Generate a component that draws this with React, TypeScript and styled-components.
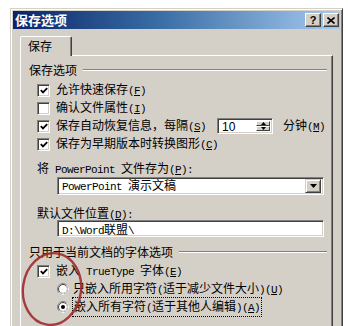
import React from "react";
import styled, { createGlobalStyle } from "styled-components";

const Global = createGlobalStyle`
  html, body { margin: 0; padding: 0; background: #fff; overflow: hidden; }
  body {
    font-family: "Noto Sans CJK SC", "Noto Sans", sans-serif;
    font-size: 12px;
    color: #000;
  }
`;

const Page = styled.div`
  position: relative;
  width: 348px;
  height: 326px;
  overflow: hidden;
`;

const Window = styled.div`
  margin: 8px 0 0 10px;
  width: 333px;
  height: 330px;
  box-sizing: border-box;
  background: #d4d0c8;
  border: 1px solid;
  border-color: #d4d0c8 #404040 #404040 #d4d0c8;
  box-shadow: inset 1px 1px 0 #fff, inset -1px -1px 0 #808080;
  padding: 2px;
  display: flex;
  flex-direction: column;
`;

const TitleBar = styled.div`
  height: 18px;
  flex: none;
  display: flex;
  align-items: center;
  padding: 0 1px 0 2px;
  background: linear-gradient(to right, #0a246a 0%, #3a6ea5 45%, #a6caf0 100%);
`;

const TitleText = styled.div`
  flex: 1;
  color: #fff;
  font-weight: bold;
  font-size: 13px;
  line-height: 18px;
`;

const TitleButton = styled.div<{ $gap?: number }>`
  box-sizing: border-box;
  width: 16px;
  height: 14px;
  margin-left: ${(p) => p.$gap ?? 0}px;
  background: #d4d0c8;
  border: 1px solid;
  border-color: #fff #404040 #404040 #fff;
  box-shadow: inset -1px -1px 0 #808080;
  display: flex;
  align-items: center;
  justify-content: center;
  font-family: "Liberation Sans", Arial, sans-serif;
  font-weight: bold;
  font-size: 11px;
  line-height: 12px;
`;

const Body = styled.div`
  flex: 1;
  display: flex;
  flex-direction: column;
  padding: 7px 7px 0 7px;
`;

const TabStrip = styled.div`
  display: flex;
  height: 19px;
  position: relative;
  z-index: 1;
`;

const Tab = styled.div`
  box-sizing: border-box;
  width: 52px;
  height: 20px;
  padding-left: 7px;
  background: #d4d0c8;
  border: 1px solid;
  border-bottom: none;
  border-color: #fff #404040 transparent #fff;
  border-radius: 2px 2px 0 0;
  box-shadow: inset -1px 0 0 #808080;
  font-size: 12px;
  line-height: 18px;
`;

const Panel = styled.div`
  flex: 1;
  box-sizing: border-box;
  border: 1px solid;
  border-color: #fff #404040 #404040 #fff;
  box-shadow: inset -1px -1px 0 #808080;
  padding: 6px 5px 0 8px;
  display: flex;
  flex-direction: column;
`;

const GroupHeader = styled.div<{ $top?: number }>`
  display: flex;
  align-items: center;
  gap: 6px;
  height: 16px;
  line-height: 16px;
  margin-top: ${(p) => p.$top ?? 0}px;
  white-space: nowrap;
`;

const GroupLine = styled.div`
  flex: 1;
  height: 0;
  border-top: 1px solid #808080;
  border-bottom: 1px solid #fff;
`;

const OptionList = styled.div<{ $top: number }>`
  display: flex;
  flex-direction: column;
  margin-top: ${(p) => p.$top}px;
  padding-left: 8px;
`;

const OptionRow = styled.div<{ $indent?: number; $gap?: number }>`
  display: flex;
  align-items: center;
  height: 18px;
  padding-left: ${(p) => p.$indent ?? 0}px;
  gap: ${(p) => p.$gap ?? 6}px;
  white-space: nowrap;
`;

const Text = styled.span`
  line-height: 16px;
  white-space: nowrap;
`;

const Mono = styled.span`
  font-family: "Liberation Mono", "DejaVu Sans Mono", monospace;
  font-size: 11px;
  letter-spacing: -0.6px;
  white-space: pre;
`;

const Under = styled.span`
  text-decoration: underline;
  text-underline-offset: 1px;
`;

const Focus = styled.span`
  border: 1px dotted #000;
  padding: 0 1px;
  line-height: 16px;
`;

const FieldLabel = styled.div<{ $top: number; $h?: number }>`
  margin-top: ${(p) => p.$top}px;
  padding-left: 8px;
  height: ${(p) => p.$h ?? 16}px;
  line-height: ${(p) => p.$h ?? 16}px;
  white-space: nowrap;
`;

const Sunken = styled.div`
  box-sizing: border-box;
  background: #fff;
  border: 1px solid;
  border-color: #808080 #fff #fff #808080;
  box-shadow: inset 1px 1px 0 #404040, inset -1px -1px 0 #d4d0c8;
`;

const Select = styled(Sunken)`
  margin: 1px 3px 0 28px;
  height: 18px;
  display: flex;
  align-items: center;
  padding: 2px 2px 2px 4px;
`;

const SelectValue = styled.div`
  flex: 1;
  line-height: 14px;
  white-space: nowrap;
`;

const DropButton = styled.div`
  box-sizing: border-box;
  width: 16px;
  height: 14px;
  background: #d4d0c8;
  border: 1px solid;
  border-color: #d4d0c8 #404040 #404040 #d4d0c8;
  box-shadow: inset 1px 1px 0 #fff, inset -1px -1px 0 #808080;
  display: flex;
  align-items: center;
  justify-content: center;
`;

const TextField = styled(Sunken)`
  margin: 0 3px 0 28px;
  height: 17px;
  padding: 0 4px;
  line-height: 15px;
  white-space: nowrap;
`;

const SpinBox = styled(Sunken)`
  margin-left: 5px;
  width: 56px;
  height: 16px;
  display: flex;
  padding: 2px;
`;

const SpinValue = styled.div`
  flex: 1;
  padding-left: 2px;
  font-family: "Liberation Sans", Arial, sans-serif;
  font-size: 12px;
  line-height: 12px;
`;

const SpinButtons = styled.div`
  width: 14px;
  display: flex;
  flex-direction: column;
`;

const SpinButton = styled.div`
  flex: 1;
  box-sizing: border-box;
  background: #d4d0c8;
  border: 1px solid;
  border-color: #fff #404040 #404040 #fff;
  display: flex;
  align-items: center;
  justify-content: center;
`;

const Unit = styled.span`
  margin-left: 4px;
  line-height: 16px;
`;

const CheckBox = styled.span`
  box-sizing: border-box;
  width: 13px;
  height: 13px;
  flex: none;
  background: #fff;
  border: 1px solid;
  border-color: #808080 #fff #fff #808080;
  box-shadow: inset 1px 1px 0 #404040, inset -1px -1px 0 #d4d0c8;
  display: flex;
  align-items: center;
  justify-content: center;
`;

const Annotation = styled.svg`
  position: absolute;
  left: 11px;
  top: 245px;
  pointer-events: none;
`;

function Key({ k, colon }: { k: string; colon?: boolean }) {
  return (
    <Mono>
      (<Under>{k}</Under>){colon ? ":" : ""}
    </Mono>
  );
}

function Check({ checked }: { checked: boolean }) {
  return (
    <CheckBox>
      {checked && (
        <svg width="8" height="7" viewBox="0 0 8 7">
          <path d="M0.8 3.2 L3 5.4 L7.2 1.2" fill="none" stroke="#000" strokeWidth="1.8" />
        </svg>
      )}
    </CheckBox>
  );
}

function Radio({ checked }: { checked: boolean }) {
  return (
    <svg width="12" height="12" viewBox="0 0 12 12" style={{ flex: "none" }}>
      <circle cx="6" cy="6" r="5.5" fill="#fff" stroke="#808080" />
      <path d="M2.11 9.89 A5.5 5.5 0 0 0 9.89 2.11" fill="none" stroke="#fff" />
      <circle cx="6" cy="6" r="4.5" fill="#fff" stroke="#404040" />
      <path d="M2.82 9.18 A4.5 4.5 0 0 0 9.18 2.82" fill="none" stroke="#d4d0c8" />
      {checked && <circle cx="6" cy="6" r="2" fill="#000" />}
    </svg>
  );
}

export default function App() {
  return (
    <Page>
      <Global />
      <Window>
        <TitleBar>
          <TitleText>保存选项</TitleText>
          <TitleButton>?</TitleButton>
          <TitleButton $gap={2}>
            <svg width="8" height="7" viewBox="0 0 8 7">
              <path d="M0.5 0.5 L7.5 6.5 M7.5 0.5 L0.5 6.5" stroke="#000" strokeWidth="1.6" />
            </svg>
          </TitleButton>
        </TitleBar>
        <Body>
          <TabStrip>
            <Tab>保存</Tab>
          </TabStrip>
          <Panel>
            <GroupHeader>
              <span>保存选项</span>
              <GroupLine />
            </GroupHeader>
            <OptionList $top={3}>
              <OptionRow>
                <Check checked />
                <Text>
                  允许快速保存
                  <Key k="F" />
                </Text>
              </OptionRow>
              <OptionRow>
                <Check checked={false} />
                <Text>
                  确认文件属性
                  <Key k="I" />
                </Text>
              </OptionRow>
              <OptionRow>
                <Check checked />
                <Text>
                  保存自动恢复信息，每隔
                  <Key k="S" />
                </Text>
                <SpinBox>
                  <SpinValue>10</SpinValue>
                  <SpinButtons>
                    <SpinButton>
                      <svg width="5" height="3" viewBox="0 0 5 3">
                        <path d="M2.5 0 L5 3 L0 3 Z" fill="#000" />
                      </svg>
                    </SpinButton>
                    <SpinButton>
                      <svg width="5" height="3" viewBox="0 0 5 3">
                        <path d="M0 0 L5 0 L2.5 3 Z" fill="#000" />
                      </svg>
                    </SpinButton>
                  </SpinButtons>
                </SpinBox>
                <Unit>
                  分钟
                  <Key k="M" />
                </Unit>
              </OptionRow>
              <OptionRow>
                <Check checked />
                <Text>
                  保存为早期版本时转换图形
                  <Key k="C" />
                </Text>
              </OptionRow>
            </OptionList>

            <FieldLabel $top={7}>
              将<Mono> PowerPoint </Mono>文件存为
              <Key k="P" colon />
            </FieldLabel>
            <Select>
              <SelectValue>
                <Mono>PowerPoint </Mono>演示文稿
              </SelectValue>
              <DropButton>
                <svg width="7" height="4" viewBox="0 0 7 4">
                  <path d="M0 0 L7 0 L3.5 4 Z" fill="#000" />
                </svg>
              </DropButton>
            </Select>

            <FieldLabel $top={10} $h={15}>
              默认文件位置
              <Key k="D" colon />
            </FieldLabel>
            <TextField>
              <Mono>D:\Word</Mono>联盟<Mono>\</Mono>
            </TextField>

            <GroupHeader $top={7}>
              <span>只用于当前文档的字体选项</span>
              <GroupLine />
            </GroupHeader>
            <OptionList $top={2}>
              <OptionRow>
                <Check checked />
                <Text>
                  嵌入<Mono> TrueType </Mono>字体
                  <Key k="E" />
                </Text>
              </OptionRow>
              <OptionRow $indent={20} $gap={4}>
                <Radio checked={false} />
                <Text>
                  只嵌入所用字符<Mono>(</Mono>适于减少文件大小<Mono>)</Mono>
                  <Key k="U" />
                </Text>
              </OptionRow>
              <OptionRow $indent={20} $gap={3}>
                <Radio checked />
                <Focus>
                  嵌入所有字符<Mono>(</Mono>适于其他人编辑<Mono>)</Mono>
                  <Key k="A" />
                </Focus>
              </OptionRow>
            </OptionList>
          </Panel>
        </Body>
      </Window>
      <Annotation width="90" height="90" viewBox="0 0 90 90">
        <ellipse
          cx="41"
          cy="44"
          rx="29"
          ry="36"
          transform="rotate(8 41 44)"
          fill="none"
          stroke="#9e2a2e"
          strokeWidth="2.4"
          opacity="0.9"
        />
      </Annotation>
    </Page>
  );
}
